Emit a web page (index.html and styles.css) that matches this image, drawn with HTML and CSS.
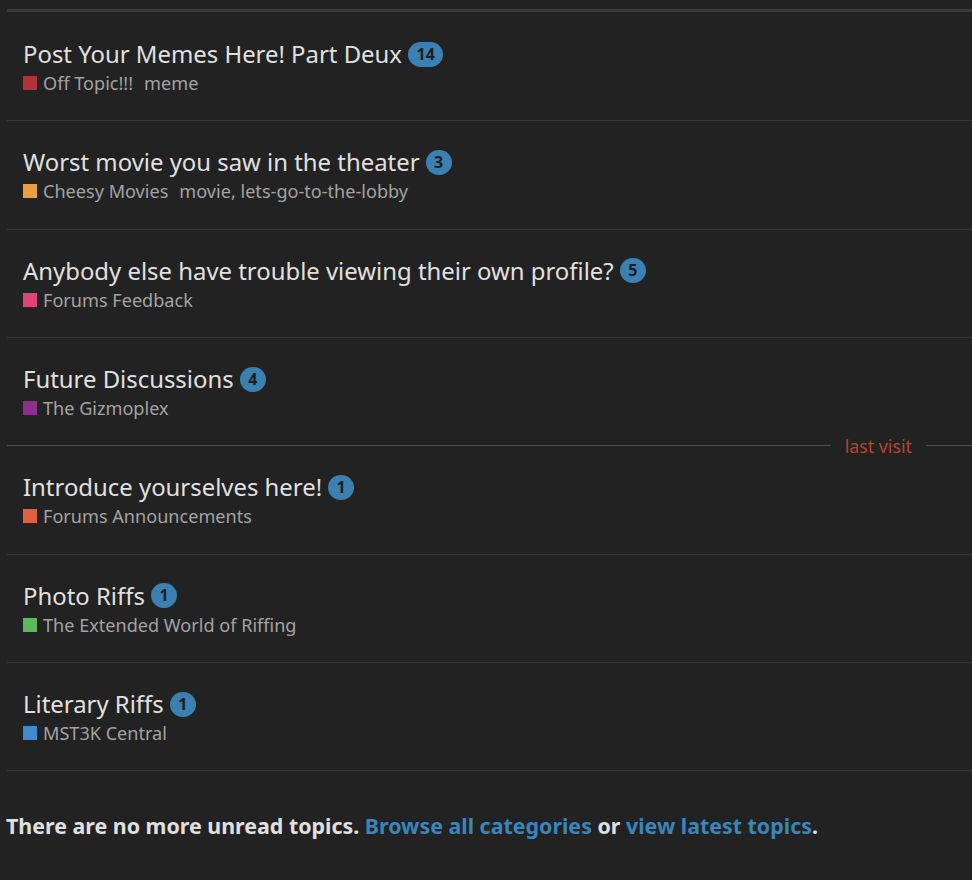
FILE: index.html
```html
<!DOCTYPE html>
<html>
<head>
<meta charset="utf-8">
<link rel="stylesheet" href="styles.css">
</head>
<body>
<div class="page">
  <div class="topic-list">
    <div class="topic-row">
      <div class="title-line"><span class="title">Post Your Memes Here! Part Deux</span><span class="badge">14</span></div>
      <div class="meta-line"><span class="cat-square red"></span><span class="cat">Off Topic!!!</span><span class="tags">meme</span></div>
    </div>
    <div class="topic-row">
      <div class="title-line"><span class="title">Worst movie you saw in the theater</span><span class="badge">3</span></div>
      <div class="meta-line"><span class="cat-square orange"></span><span class="cat">Cheesy Movies</span><span class="tags">movie, lets-go-to-the-lobby</span></div>
    </div>
    <div class="topic-row">
      <div class="title-line"><span class="title">Anybody else have trouble viewing their own profile?</span><span class="badge">5</span></div>
      <div class="meta-line"><span class="cat-square pink"></span><span class="cat">Forums Feedback</span></div>
    </div>
    <div class="topic-row last-visit">
      <div class="title-line"><span class="title">Future Discussions</span><span class="badge">4</span></div>
      <div class="meta-line"><span class="cat-square purple"></span><span class="cat">The Gizmoplex</span></div>
      <span class="last-visit-label">last visit</span>
    </div>
    <div class="topic-row">
      <div class="title-line"><span class="title">Introduce yourselves here!</span><span class="badge">1</span></div>
      <div class="meta-line"><span class="cat-square coral"></span><span class="cat">Forums Announcements</span></div>
    </div>
    <div class="topic-row">
      <div class="title-line"><span class="title">Photo Riffs</span><span class="badge">1</span></div>
      <div class="meta-line"><span class="cat-square green"></span><span class="cat">The Extended World of Riffing</span></div>
    </div>
    <div class="topic-row">
      <div class="title-line"><span class="title">Literary Riffs</span><span class="badge">1</span></div>
      <div class="meta-line"><span class="cat-square blue"></span><span class="cat">MST3K Central</span></div>
    </div>
  </div>
  <p class="footer-msg">There are no more unread topics. <a href="#">Browse all categories</a> or <a href="#">view latest topics</a>.</p>
</div>
</body>
</html>
```

FILE: styles.css
```css
html, body {
  margin: 0;
  padding: 0;
  background: #222222;
}
body {
  font-family: "Noto Sans", "Open Sans", sans-serif;
  color: #dddddd;
}
.page {
  padding-top: 9px;
}
.topic-list {
  margin-left: 7px;
  border-top: 3px solid #3a3a3a;
}
.topic-row {
  position: relative;
  padding: 27px 0 26.35px 16px;
  border-bottom: 1px solid #383838;
  display: flex;
  flex-direction: column;
  gap: 4px;
}
.topic-row:first-child {
  padding-top: 28px;
}
.topic-row.last-visit {
  border-bottom-color: #8a3b2b;
}
.last-visit-label {
  position: absolute;
  right: 46px;
  bottom: -12px;
  padding: 0 14px;
  background: #222222;
  color: #b8442f;
  font-size: 17.8px;
  line-height: 22px;
}
.title-line {
  display: flex;
  align-items: center;
  height: 28px;
}
.title {
  font-size: 23.9px;
  color: #e0e0e0;
  line-height: 28px;
}
.badge {
  margin-left: 6px;
  min-width: 26px;
  height: 25px;
  box-sizing: border-box;
  padding: 0 8.5px;
  border-radius: 13px;
  background: #3a80b0;
  color: #1e1e1e;
  font-weight: 700;
  font-size: 16px;
  line-height: 25px;
  text-align: center;
}
.meta-line {
  display: flex;
  align-items: center;
  height: 22px;
  font-size: 18.1px;
  color: #a3a3a3;
}
.cat-square {
  width: 14px;
  height: 14px;
  margin-right: 6px;
  flex: none;
}
.red { background: #b5313a; }
.orange { background: #eb9f43; }
.pink { background: #e0437a; }
.purple { background: #8c2f8f; }
.coral { background: #e0603f; }
.green { background: #5cb85c; }
.blue { background: #3d8ad1; }
.tags {
  margin-left: 11px;
}
.footer-msg {
  margin: 41px 0 0 6px;
  font-family: "Noto Sans", sans-serif;
  font-weight: 700;
  font-size: 21.4px;
  line-height: 28px;
  color: #e0e0e0;
}
.footer-msg a {
  color: #3a85ba;
  text-decoration: none;
}
```
